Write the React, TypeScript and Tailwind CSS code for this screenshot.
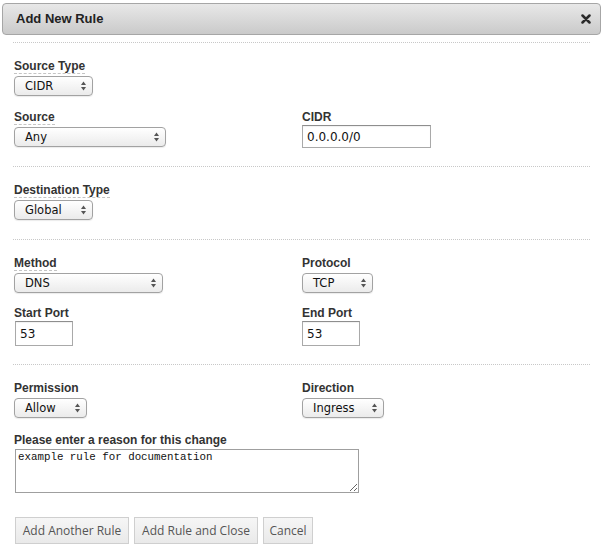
import React from "react";

function Label({ text, tip }: { text: string; tip?: boolean }) {
  return (
    <div className="h-[15px] flex items-start">
      <span
        className={
          tip
            ? "block text-[12px] leading-[14px] font-bold text-[#333] border-b border-dashed border-[#c4c4c4]"
            : "block text-[12px] leading-[14px] font-bold text-[#333] border-b border-transparent"
        }
      >
        {text}
      </span>
    </div>
  );
}

function Sel({ value, w }: { value: string; w: string }) {
  return (
    <div
      className={`relative mt-[2px] h-[20px] ${w} rounded-[4px] border border-[#a2a2a2] bg-gradient-to-b from-white to-[#ebebeb] shadow-[0_1px_1px_rgba(0,0,0,0.08)] pl-[10px] text-[11.5px] leading-[18px] text-[#111] font-['DejaVu_Sans',sans-serif]`}
    >
      {value}
      <svg
        className="absolute right-[6px] top-[4px]"
        width="5"
        height="10"
        viewBox="0 0 5 10"
      >
        <polygon points="2.5,0.5 5,4 0,4" fill="#555" />
        <polygon points="0,6 5,6 2.5,9.5" fill="#555" />
      </svg>
    </div>
  );
}

function Inp({ value, w, h }: { value: string; w: string; h: string }) {
  return (
    <div
      className={`${w} ${h} border border-[#a9a9a9] border-t-[#8e8e8e] bg-white pl-[4px] flex items-center text-[12px] text-[#111] font-['DejaVu_Sans',sans-serif] shadow-[inset_0_1px_1px_rgba(0,0,0,0.06)]`}
    >
      {value}
    </div>
  );
}

function Hr() {
  return <div className="-ml-[1px] border-t border-dotted border-[#c8c8c8]" />;
}

function Btn({ text, w }: { text: string; w: string }) {
  return (
    <div
      className={`${w} h-[27px] flex items-center justify-center border border-[#cfcfcf] bg-gradient-to-b from-[#f6f6f6] to-[#e9e9e9] text-[12px] text-[#555] font-['Open_Sans',sans-serif]`}
    >
      {text}
    </div>
  );
}

export default function App() {
  return (
    <div className="w-[603px] h-[553px] bg-white overflow-hidden font-['Liberation_Sans',Arial,sans-serif]">
      <div className="mx-[2px] mt-[3px] h-[32px] rounded-[4px] border border-[#a6a6a6] bg-gradient-to-b from-[#e8e8e8] to-[#cacaca] flex items-center justify-between pl-[13px] pr-[9px]">
        <span className="text-[13px] font-bold text-[#222]">Add New Rule</span>
        <svg width="10" height="10" viewBox="0 0 10 10">
          <path d="M1.5 1.5 L8.5 8.5 M8.5 1.5 L1.5 8.5" stroke="#2a2a2a" strokeWidth="2.5" strokeLinecap="round" />
        </svg>
      </div>
      <div className="mt-[7px] pl-[14px] pr-[13px]">
        <Hr />
        {/* Section 1 */}
        <div className="pt-[16px] pb-[18px]">
          <Label text="Source Type" tip />
          <Sel value="CIDR" w="w-[79px]" />
          <div className="mt-[14px] grid grid-cols-2">
            <div>
              <Label text="Source" tip />
              <Sel value="Any" w="w-[152px]" />
            </div>
            <div>
              <Label text="CIDR" />
              <Inp value="0.0.0.0/0" w="w-[129px]" h="h-[23px]" />
            </div>
          </div>
        </div>
        <Hr />
        {/* Section 2 */}
        <div className="pt-[16px] pb-[19px]">
          <Label text="Destination Type" tip />
          <Sel value="Global" w="w-[79px]" />
        </div>
        <Hr />
        {/* Section 3 */}
        <div className="pt-[16px] pb-[18px]">
          <div className="grid grid-cols-2">
            <div>
              <Label text="Method" tip />
              <Sel value="DNS" w="w-[149px]" />
            </div>
            <div>
              <Label text="Protocol" />
              <Sel value="TCP" w="w-[71px]" />
            </div>
          </div>
          <div className="mt-[13px] grid grid-cols-2">
            <div>
              <Label text="Start Port" />
              <div className="ml-[1px]">
                <Inp value="53" w="w-[58px]" h="h-[25px]" />
              </div>
            </div>
            <div>
              <Label text="End Port" />
              <Inp value="53" w="w-[58px]" h="h-[25px]" />
            </div>
          </div>
        </div>
        <Hr />
        {/* Section 4 */}
        <div className="pt-[16px]">
          <div className="grid grid-cols-2">
            <div>
              <Label text="Permission" />
              <Sel value="Allow" w="w-[73px]" />
            </div>
            <div>
              <Label text="Direction" />
              <Sel value="Ingress" w="w-[82px]" />
            </div>
          </div>
          <div className="mt-[15px]">
            <Label text="Please enter a reason for this change" />
            <textarea
              className="mt-[1px] ml-[1px] block w-[344px] h-[44px] border border-[#9f9f9f] bg-white px-[2px] pt-[1px] text-[10.8px] leading-[13px] text-[#111] font-['Liberation_Mono',monospace] outline-none"
              defaultValue="example rule for documentation"
            />
          </div>
          <div className="mt-[24px] ml-[1px] flex gap-[5px]">
            <Btn text="Add Another Rule" w="w-[114px]" />
            <Btn text="Add Rule and Close" w="w-[124px]" />
            <Btn text="Cancel" w="w-[50px]" />
          </div>
        </div>
      </div>
    </div>
  );
}
